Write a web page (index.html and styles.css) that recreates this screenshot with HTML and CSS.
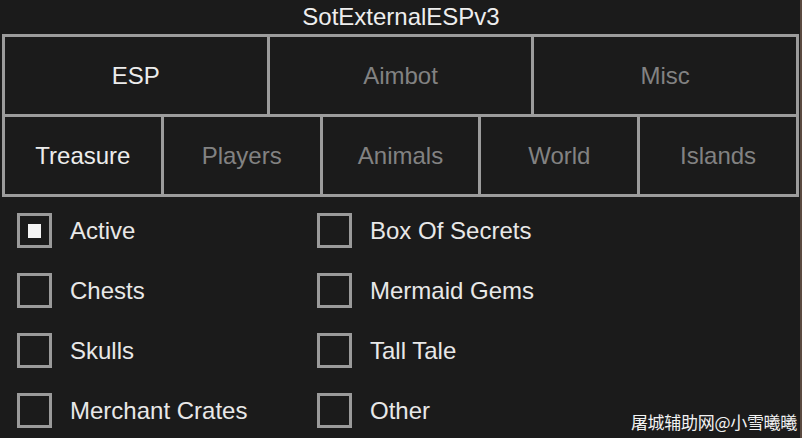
FILE: index.html
```html
<!DOCTYPE html>
<html>
<head>
<meta charset="utf-8">
<link rel="stylesheet" href="styles.css">
</head>
<body>
<div class="win">
  <div class="title">SotExternalESPv3</div>
  <div class="tabs">
    <div class="row r3">
      <div class="tab on">ESP</div>
      <div class="tab">Aimbot</div>
      <div class="tab">Misc</div>
    </div>
    <div class="row r5">
      <div class="tab on">Treasure</div>
      <div class="tab">Players</div>
      <div class="tab">Animals</div>
      <div class="tab">World</div>
      <div class="tab">Islands</div>
    </div>
  </div>
  <div class="opts">
    <div class="opt"><span class="box checked"><span class="fill"></span></span><span class="lbl">Active</span></div>
    <div class="opt"><span class="box"></span><span class="lbl">Box Of Secrets</span></div>
    <div class="opt"><span class="box"></span><span class="lbl">Chests</span></div>
    <div class="opt"><span class="box"></span><span class="lbl">Mermaid Gems</span></div>
    <div class="opt"><span class="box"></span><span class="lbl">Skulls</span></div>
    <div class="opt"><span class="box"></span><span class="lbl">Tall Tale</span></div>
    <div class="opt"><span class="box"></span><span class="lbl">Merchant Crates</span></div>
    <div class="opt"><span class="box"></span><span class="lbl">Other</span></div>
  </div>
  <div class="wm">屠城辅助网@小雪曦曦</div>
</div>
</body>
</html>
```
FILE: styles.css
```css
html, body {
  margin: 0;
  padding: 0;
  background: #1b1b1b;
}
.win {
  position: relative;
  width: 802px;
  height: 438px;
  overflow: hidden;
  background: #1b1b1b;
  font-family: "Liberation Sans", Arial, sans-serif;
  box-shadow: inset -2px 0 0 #5a4a40;
}
.title {
  height: 34px;
  line-height: 34px;
  text-align: center;
  font-size: 24px;
  color: #eeeeee;
}
.tabs {
  margin-left: 2px;
  width: 791px;
  padding: 3px;
  background: #9c9c9c;
  display: flex;
  flex-direction: column;
  gap: 3px;
}
.row {
  display: grid;
  gap: 3px;
  height: 77px;
}
.r3 { grid-template-columns: repeat(3, 1fr); }
.r5 { grid-template-columns: repeat(5, 1fr); }
.tab {
  background: #1b1b1b;
  display: flex;
  align-items: center;
  justify-content: center;
  font-size: 24px;
  color: #828282;
}
.tab.on {
  color: #ececec;
}
.opts {
  margin-top: 16px;
  padding-left: 17px;
  display: grid;
  grid-template-columns: 300px 300px;
  row-gap: 25px;
}
.opt {
  display: flex;
  align-items: center;
  height: 35px;
}
.box {
  box-sizing: border-box;
  width: 35px;
  height: 35px;
  border: 3px solid #9a9a9a;
  display: flex;
  align-items: center;
  justify-content: center;
  flex: none;
}
.fill {
  width: 13px;
  height: 14px;
  background: #f4f4f4;
}
.lbl {
  margin-left: 18px;
  font-size: 24px;
  color: #e8e8e8;
}
.wm {
  position: absolute;
  right: 5px;
  bottom: 4px;
  font-family: "Noto Sans CJK SC", sans-serif;
  font-size: 17px;
  letter-spacing: -0.3px;
  color: #f2f2f2;
}
```
